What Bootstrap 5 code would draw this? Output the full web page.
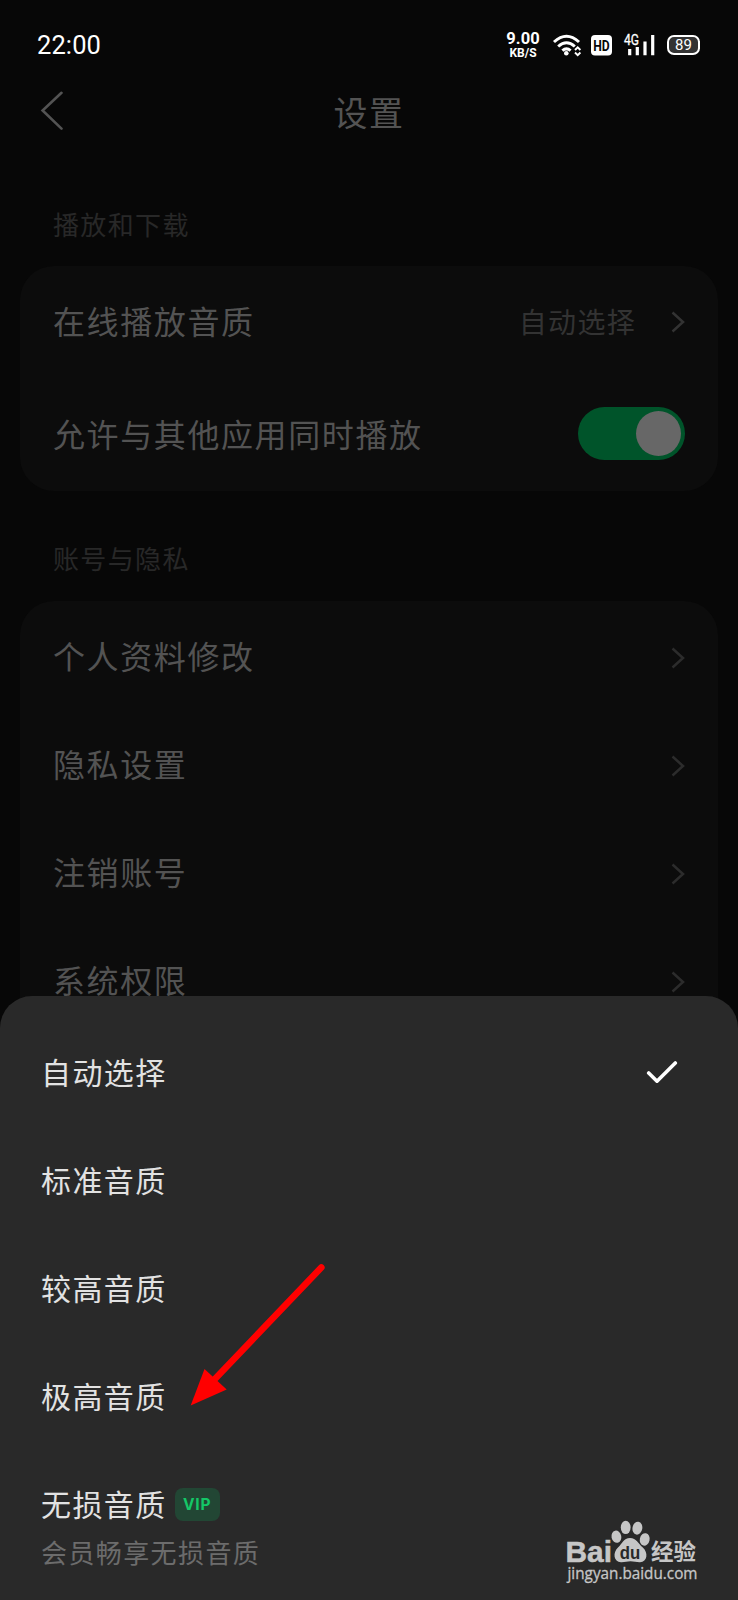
<!DOCTYPE html>
<html lang="zh-CN">
<head>
<meta charset="utf-8">
<meta name="viewport" content="width=device-width, initial-scale=1">
<title>设置</title>
<link href="https://cdn.jsdelivr.net/npm/bootstrap@5.3.0/dist/css/bootstrap.min.css" rel="stylesheet">
<style>
body{background:#070707;font-family:Roboto,"Noto Sans CJK SC",sans-serif;margin:0}
.screen{width:738px;height:1600px;background:#070707;color:#535353;line-height:1}
svg{display:block;flex:none}
.statusbar{height:68px;padding:22px 38px 0 37px;color:#fff}
.clock{font-size:25.5px;letter-spacing:.1px;line-height:46px}
.speed{width:36px;margin-right:9px;padding-top:10px;font-weight:700;text-align:center}
.speed-num{font-size:16.5px;line-height:14px;letter-spacing:.1px}
.speed-unit{font-size:12px;line-height:14px}
.topbar{height:91px}
.page-title{font-size:34px;letter-spacing:1.6px}
.back{left:39px;top:23px}
.group-label{font-size:26px;letter-spacing:1.35px;color:#282828;padding-left:53px}
.panel{background:#0c0c0c;border-radius:34px;margin:0 20px;padding:0 33px}
.item{font-size:32px;letter-spacing:1.6px;height:108px}
.item-value{font-size:28px;letter-spacing:1.3px;color:#333;margin-right:35px;padding-top:3px}
.toggle{width:107px;height:53px;border-radius:27px;background:#00542a;padding:4px}
.knob{width:45px;height:45px;border-radius:50%;background:#676767}
.sheet{top:996px;height:604px;background:#292929;border-radius:32px 32px 0 0;padding:24px 41px 0;color:#e2e2e2}
.option{height:108px;font-size:30px;letter-spacing:1.4px}
.vip{width:45px;height:33px;border-radius:8px;background:#224634;color:#14c767;font:700 15.5px Inter,sans-serif;letter-spacing:.8px;margin-left:8px;margin-top:-4px}
.option-note{font-size:26px;letter-spacing:1.4px;color:#6c6c6c;margin-top:-19px}
.pointer{left:186px;top:1260px}
.watermark{left:562px;top:1515px}
</style>
</head>
<body>
<main class="screen position-relative overflow-hidden">
  <header class="statusbar d-flex justify-content-between">
    <div class="clock">22:00</div>
    <div class="d-flex">
      <div class="speed d-flex flex-column align-items-center"><span class="speed-num">9.00</span><span class="speed-unit">KB/S</span></div>
      <svg width="150" height="46" viewBox="550 22 150 46">
        <g fill="none" stroke="#fff" stroke-width="3">
          <path d="M554 42Q566.5 30.5 579 42M558.2 46.5Q566.5 39 574.8 46.5M562.4 50.7Q566.5 47 570.6 50.7"/>
        </g>
        <circle cx="566.3" cy="53.3" r="2.3" fill="#fff"/>
        <path d="M575 50l2.7-2.7 2.7 2.7M575 52.5l2.7 2.7 2.7-2.7" fill="none" stroke="#fff" stroke-width="1.9"/>
        <rect x="591" y="35" width="21" height="20.5" rx="4" fill="#fff"/>
        <text x="601.5" y="51" text-anchor="middle" textLength="16.5" lengthAdjust="spacingAndGlyphs" font-family="Roboto" font-weight="700" font-size="15.5" fill="#070707">HD</text>
        <text x="624" y="45.4" textLength="15" lengthAdjust="spacingAndGlyphs" font-family="Roboto" font-size="14" fill="#fff" stroke="#fff" stroke-width=".3">4G</text>
        <path d="M629.7 49v6.3M637.3 47v8.3M645 41.5v13.8M652.7 35v20.3" stroke="#fff" stroke-width="3.2"/>
        <rect x="668" y="36" width="31" height="18" rx="6" fill="#333" stroke="#fff" stroke-width="2"/>
        <path d="M699.5 41.5q1.5 3.5 0 7z" fill="#fff" stroke="#fff"/>
        <text x="683.5" y="50.2" text-anchor="middle" font-family="Roboto" font-size="15" fill="#fff">89</text>
      </svg>
    </div>
  </header>

  <nav class="topbar position-relative d-flex justify-content-center align-items-center">
    <svg class="back position-absolute" width="28" height="42" viewBox="39 91 28 42"><path d="M61.5 92.8L42.6 110.5L61.5 128.6" fill="none" stroke="#535353" stroke-width="2.6" stroke-linecap="round"/></svg>
    <div class="page-title">设置</div>
  </nav>

  <div class="group-label d-flex align-items-center" style="height:133px">播放和下载</div>
  <section class="panel" style="height:225px;margin-top:-26px">
    <div class="item d-flex align-items-center" style="height:112px">
      <span class="me-auto" style="padding-top:2px">在线播放音质</span><span class="item-value">自动选择</span>
      <svg width="14" height="24" viewBox="0 0 14 24"><path d="M1.5 2.5L12 12L1.5 21.5" fill="none" stroke="#333" stroke-width="2.5"/></svg>
    </div>
    <div class="item d-flex align-items-center justify-content-between" style="height:111px">
      <span class="pt-1">允许与其他应用同时播放</span>
      <div class="toggle d-flex justify-content-end"><div class="knob"></div></div>
    </div>
  </section>

  <div class="group-label d-flex align-items-center" style="height:110px;padding-top:28px">账号与隐私</div>
  <section class="panel" style="height:460px;padding-top:3px">
    <div class="item d-flex align-items-center justify-content-between"><span>个人资料修改</span>
      <svg width="14" height="24" viewBox="0 0 14 24"><path d="M1.5 2.5L12 12L1.5 21.5" fill="none" stroke="#2c2c2c" stroke-width="2.5"/></svg></div>
    <div class="item d-flex align-items-center justify-content-between"><span>隐私设置</span>
      <svg width="14" height="24" viewBox="0 0 14 24"><path d="M1.5 2.5L12 12L1.5 21.5" fill="none" stroke="#2c2c2c" stroke-width="2.5"/></svg></div>
    <div class="item d-flex align-items-center justify-content-between"><span>注销账号</span>
      <svg width="14" height="24" viewBox="0 0 14 24"><path d="M1.5 2.5L12 12L1.5 21.5" fill="none" stroke="#2c2c2c" stroke-width="2.5"/></svg></div>
    <div class="item d-flex align-items-center justify-content-between"><span>系统权限</span>
      <svg width="14" height="24" viewBox="0 0 14 24"><path d="M1.5 2.5L12 12L1.5 21.5" fill="none" stroke="#2c2c2c" stroke-width="2.5"/></svg></div>
  </section>

  <!-- quality picker sheet -->
  <section class="sheet position-absolute start-0 w-100">
    <div class="option d-flex align-items-center justify-content-between"><span>自动选择</span>
      <svg width="32" height="26" viewBox="646 1061 32 26" style="margin-right:19px"><path d="M648.7 1073L657 1081.2L675.3 1063" fill="none" stroke="#fff" stroke-width="3.6" stroke-linecap="round" stroke-linejoin="round"/></svg></div>
    <div class="option d-flex align-items-center">标准音质</div>
    <div class="option d-flex align-items-center">较高音质</div>
    <div class="option d-flex align-items-center">极高音质</div>
    <div class="option d-flex align-items-center">无损音质<span class="vip d-flex align-items-center justify-content-center">VIP</span></div>
    <div class="option-note">会员畅享无损音质</div>
  </section>

  <svg class="pointer position-absolute" width="145" height="150" viewBox="186 1260 145 150">
    <path d="M321.3 1267.5L213 1381" stroke="#f00" stroke-width="6.6" stroke-linecap="round"/>
    <path d="M190.7 1405.5L204.5 1369L226.7 1389.5Z" fill="#f00"/>
  </svg>

  <svg class="watermark position-absolute" width="145" height="75" viewBox="562 1515 145 75" fill="#c6c6c6">
    <text x="565.5" y="1561.5" textLength="46.5" lengthAdjust="spacingAndGlyphs" font-family="Liberation Sans" font-weight="700" font-size="30" stroke="#c6c6c6" stroke-width=".5">Bai</text>
    <ellipse cx="616.4" cy="1536.7" rx="4.9" ry="6.2" transform="rotate(-12 616.4 1536.7)"/>
    <ellipse cx="625.7" cy="1527.4" rx="4.9" ry="6.7"/>
    <ellipse cx="637.4" cy="1528.2" rx="4.9" ry="6.5" transform="rotate(10 637.4 1528.2)"/>
    <ellipse cx="644.7" cy="1539.4" rx="4.9" ry="6.3" transform="rotate(12 644.7 1539.4)"/>
    <path d="M630 1538C623.5 1538 622.5 1543.5 618 1547.5C612.5 1552.5 613.5 1562 621 1562.2C625 1562.3 627 1561.3 630.5 1561.3S636.5 1562.3 640 1562.2C647.5 1562 648.5 1552.5 642.8 1547.5C638 1543.5 636.5 1538 630 1538Z"/>
    <text x="630" y="1558.5" text-anchor="middle" textLength="20.5" lengthAdjust="spacingAndGlyphs" font-family="Liberation Sans" font-weight="700" font-size="18" fill="#292929">du</text>
    <text x="651" y="1559.5" textLength="45" font-family="Noto Sans CJK SC" font-weight="700" font-size="22.5">经验</text>
    <text x="567.5" y="1579" textLength="130" lengthAdjust="spacingAndGlyphs" font-family="Open Sans" font-size="15.5" stroke="#c6c6c6" stroke-width=".3">jingyan.baidu.com</text>
  </svg>
</main>
<script src="https://cdn.jsdelivr.net/npm/bootstrap@5.3.0/dist/js/bootstrap.bundle.min.js"></script>
</body>
</html>
